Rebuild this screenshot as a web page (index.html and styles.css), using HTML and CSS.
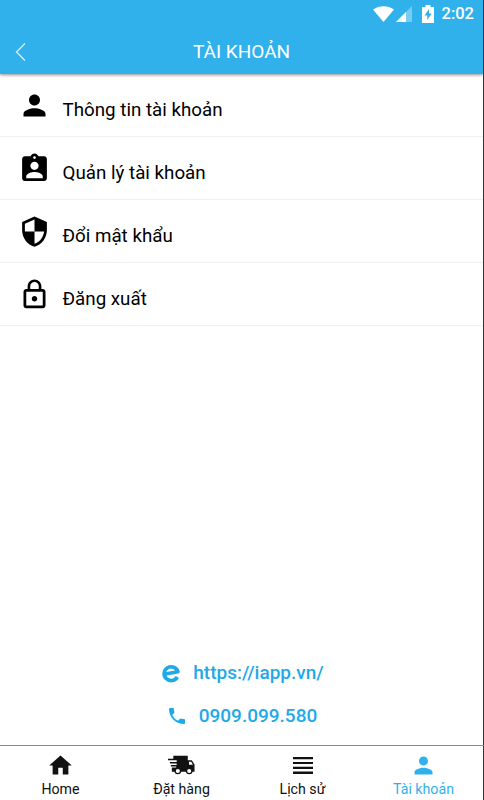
FILE: index.html
```html
<!DOCTYPE html>
<html lang="vi">
<head>
  <meta charset="UTF-8" />
  <meta name="viewport" content="width=device-width, initial-scale=1.0" />
  <title>Tài khoản</title>
  <link rel="stylesheet" href="styles.css">
</head>
<body>
  <div class="app">
    <header class="header">
      <div class="status-bar">
        <svg class="wifi" viewBox="0 0 21 16"><path d="M10.500 16L0 3.500C6-1 15-1 21 3.500z" /></svg>
        <svg class="signal" viewBox="0 0 16 16"><path opacity=".35" d="M16 0v16H0z" /><path d="M10 6v10H0z" /></svg>
        <svg class="battery" viewBox="0 0 12 18"><path fill-rule="evenodd" d="M3.500 0h5v2H12v16H0V2h3.500zM7 4L2.500 10.500H5.300V15L9.700 8.500H7z" /></svg>
        <span class="time">2:02</span>
      </div>
      <div class="title-bar">
        <svg class="back" viewBox="0 0 12 20"><path d="M10 1.500L1.500 10l8.500 8.500" /></svg>
        <h1>TÀI KHOẢN</h1>
      </div>
    </header>

    <main class="content">
      <ul class="menu">
        <li class="menu-item">
          <svg viewBox="0 0 24 24"><path d="M12 12c2.210 0 4-1.790 4-4s-1.790-4-4-4-4 1.790-4 4 1.790 4 4 4zm0 2c-2.670 0-8 1.340-8 4v2h16v-2c0-2.660-5.330-4-8-4z" /></svg>
          <span>Thông tin tài khoản</span>
        </li>
        <li class="menu-item">
          <svg viewBox="0 0 24 24"><path d="M19 3h-4.180C14.400 1.840 13.300 1 12 1c-1.300 0-2.400.84-2.820 2H5c-1.100 0-2 .9-2 2v14c0 1.100.9 2 2 2h14c1.100 0 2-.9 2-2V5c0-1.100-.9-2-2-2zm-7 0c.55 0 1 .45 1 1s-.45 1-1 1-1-.45-1-1 .45-1 1-1zm0 4c1.660 0 3 1.340 3 3s-1.340 3-3 3-3-1.340-3-3 1.340-3 3-3zm6 12H6v-1.400c0-2 4-3.100 6-3.100s6 1.100 6 3.100V19z" /></svg>
          <span>Quản lý tài khoản</span>
        </li>
        <li class="menu-item">
          <svg viewBox="0 0 24 24"><path d="M12 1L3 5v6c0 5.550 3.840 10.740 9 12 5.160-1.260 9-6.450 9-12V5l-9-4zm0 10.990h7c-.53 4.120-3.280 7.790-7 8.940V12H5V6.300l7-3.110v8.800z" /></svg>
          <span>Đổi mật khẩu</span>
        </li>
        <li class="menu-item">
          <svg viewBox="0 0 24 24"><path d="M12 17c1.100 0 2-.9 2-2s-.9-2-2-2-2 .9-2 2 .9 2 2 2zm6-9h-1V6c0-2.760-2.240-5-5-5S7 3.240 7 6v2H6c-1.100 0-2 .9-2 2v10c0 1.100.9 2 2 2h12c1.100 0 2-.9 2-2V10c0-1.100-.9-2-2-2zM8.900 6c0-1.710 1.390-3.100 3.100-3.100s3.100 1.390 3.100 3.100v2H8.900V6zM18 20H6V10h12v10z" /></svg>
          <span>Đăng xuất</span>
        </li>
      </ul>

      <div class="contact">
        <a class="contact-link" href="#">
          <svg class="web-icon" viewBox="0 0 18 18"><path d="M15.300 13A7 6.900 0 1 1 15.900 7.800L3.500 10" /></svg>
          <span>https://iapp.vn/</span>
        </a>
        <a class="contact-link" href="#">
          <svg class="phone-icon" viewBox="3 3 18 18"><path d="M6.620 10.790c1.440 2.830 3.760 5.140 6.590 6.590l2.200-2.200c.27-.27.670-.36 1.020-.24 1.120.37 2.330.57 3.570.57.550 0 1 .45 1 1V20c0 .55-.45 1-1 1-9.390 0-17-7.610-17-17 0-.55.450-1 1-1h3.500c.55 0 1 .45 1 1 0 1.250.2 2.450.57 3.570.11.350.03.740-.25 1.020l-2.200 2.200z" /></svg>
          <span>0909.099.580</span>
        </a>
      </div>
    </main>

    <nav class="tabs">
      <a class="tab" href="#">
        <svg viewBox="0 0 24 24"><path d="M10 20v-6h4v6h5v-8h3L12 3 2 12h3v8z" /></svg>
        <span>Home</span>
      </a>
      <a class="tab" href="#">
        <svg class="truck" viewBox="0 0 28 20">
          <path d="M5.500 .3H20.500V5h4.200l2.800 4.500V17H4v-4.500h4.500v-1H3V10h6V8.500H2V7h7V5H0V3.400h5.500z" />
          <path class="window" d="M21.800 6.500h2.300l1.700 3.300h-4z" />
          <circle class="wheel" cx="10.200" cy="16.200" r="2.800" />
          <circle class="wheel" cx="22" cy="16.200" r="2.800" />
        </svg>
        <span>Đặt hàng</span>
      </a>
      <a class="tab" href="#">
        <svg class="lines" viewBox="0 0 20 17"><path d="M0 0h20v2.300H0zM0 4.900h20v2.200H0zM0 9.800h20V12H0zM0 14.600h20v2.300H0z" /></svg>
        <span>Lịch sử</span>
      </a>
      <a class="tab active" href="#">
        <svg viewBox="0 0 24 24"><path d="M12 12c2.210 0 4-1.790 4-4s-1.790-4-4-4-4 1.790-4 4 1.790 4 4 4zm0 2c-2.670 0-8 1.340-8 4v2h16v-2c0-2.660-5.330-4-8-4z" /></svg>
        <span>Tài khoản</span>
      </a>
    </nav>
  </div>
</body>
</html>
```

FILE: styles.css
```css
* {
  box-sizing: border-box;
}

body {
  font-family: Roboto, "Liberation Sans", sans-serif;
  margin: 0;
  background: #fff;
  color: #111;
}

a {
  color: inherit;
  text-decoration: none;
}

svg {
  display: block;
  fill: currentColor;
  flex: none;
}

.app {
  display: flex;
  flex-direction: column;
  height: 800px;
  border-right: 1px solid #333;
}

/* Header */
.header {
  height: 74px;
  background: #31b1eb;
  color: #fff;
  box-shadow: 0 1px 3px rgba(0, 0, 0, 0.45);
  clip-path: inset(0 0 -5px 0);
}

.status-bar {
  display: flex;
  align-items: center;
  justify-content: flex-end;
  height: 27px;
  padding-right: 9px;
}

.wifi {
  width: 21px;
  height: 16px;
}

.signal {
  width: 16px;
  height: 16px;
  margin-left: 2px;
}

.battery {
  width: 12px;
  height: 18px;
  margin-left: 10px;
}

.time {
  margin-left: 8px;
  font-size: 16.5px;
  font-weight: 500;
  line-height: 27px;
}

.title-bar {
  display: grid;
  grid-template-columns: 28px 1fr 28px;
  align-items: center;
  height: 47px;
  padding-top: 2px;
}

.back {
  width: 12px;
  height: 20px;
  margin-left: 15px;
  fill: none;
  stroke: #d6effb;
  stroke-width: 1.3;
}

.title-bar h1 {
  margin: 0;
  font-size: 19px;
  font-weight: 400;
  line-height: 24px;
  text-align: center;
}

/* Account menu */
.content {
  display: flex;
  flex-direction: column;
  flex: 1;
}

.menu {
  margin: 0;
  padding: 0;
  list-style: none;
}

.menu-item {
  display: flex;
  align-items: center;
  height: 63px;
  padding-left: 18px;
  border-bottom: 1px solid #efefef;
  color: #000;
  font-size: 18.75px;
}

.menu-item svg {
  width: 33px;
  height: 33px;
}

.menu-item span {
  margin-left: 11.5px;
  padding-top: 9px;
  line-height: 24px;
}

/* Contact info */
.contact {
  display: flex;
  flex-direction: column;
  align-items: center;
  margin-top: auto;
  padding-bottom: 8px;
  padding-left: 3px;
  color: #1fa9e8;
  font-size: 19px;
  font-weight: 500;
}

.contact-link {
  display: flex;
  align-items: center;
  height: 43px;
}

.web-icon {
  width: 18px;
  height: 18px;
  margin-right: 13px;
  fill: none;
  stroke: currentColor;
  stroke-width: 3.7;
  stroke-linejoin: round;
  overflow: visible;
}

.phone-icon {
  width: 16px;
  height: 16px;
  margin-right: 14px;
}

/* Bottom tabs */
.tabs {
  display: grid;
  grid-template-columns: repeat(4, 1fr);
  height: 55px;
  margin-right: -1px;
  border-top: 1px solid #888;
}

.tab {
  display: flex;
  flex-direction: column;
  align-items: center;
  padding-top: 6px;
  font-size: 14.2px;
  line-height: 20px;
}

.tab svg {
  width: 27px;
  height: 27px;
}

.tab .truck {
  height: 20px;
  margin: 3px 0 4px;
}

.tab .lines {
  width: 20px;
  height: 17px;
  margin: 5px 0;
}

.truck .window {
  fill: #fff;
}

.truck .wheel {
  fill: #fff;
  stroke: currentColor;
  stroke-width: 1.3;
}

.tab.active {
  color: #31b1eb;
}
```
